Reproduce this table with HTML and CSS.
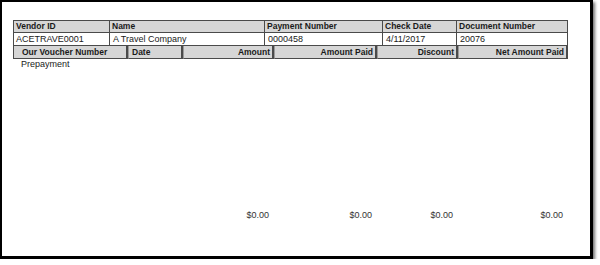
FILE: index.html
```html
<!DOCTYPE html>
<html>
<head>
<meta charset="utf-8">
<link rel="stylesheet" href="styles.css">
</head>
<body>
<div class="frame">
  <div class="report">
    <div class="grid top hdr">
      <div class="cell">Vendor ID</div>
      <div class="cell">Name</div>
      <div class="cell">Payment Number</div>
      <div class="cell">Check Date</div>
      <div class="cell">Document Number</div>
    </div>
    <div class="grid top data">
      <div class="cell">ACETRAVE0001</div>
      <div class="cell">A Travel Company</div>
      <div class="cell">0000458</div>
      <div class="cell">4/11/2017</div>
      <div class="cell">20076</div>
    </div>
    <div class="grid lines sub">
      <div class="cell first">Our Voucher Number</div>
      <div class="cell">Date</div>
      <div class="cell num">Amount</div>
      <div class="cell num">Amount Paid</div>
      <div class="cell num">Discount</div>
      <div class="cell num">Net Amount Paid</div>
    </div>
    <div class="memo">Prepayment</div>
    <div class="grid lines totals">
      <div class="cell"></div>
      <div class="cell"></div>
      <div class="cell num">$0.00</div>
      <div class="cell num">$0.00</div>
      <div class="cell num">$0.00</div>
      <div class="cell num">$0.00</div>
    </div>
  </div>
</div>
</body>
</html>
```
FILE: styles.css
```css
html, body {
  margin: 0;
  padding: 0;
  background: #ffffff;
}
body {
  font-family: "Liberation Sans", Arial, sans-serif;
  color: #1a1a1a;
}
.frame {
  width: 588px;
  height: 254px;
  border: 2px solid #000;
  border-right-width: 3px;
  border-bottom-width: 3px;
  box-shadow: 2px 2px 3px rgba(0, 0, 0, 0.55);
  background: #fff;
}
.report {
  width: 555px;
  padding: 18px 0 0 11px;
}
.grid {
  display: grid;
}
.top {
  grid-template-columns: 95px 155px 118px 74px 113px;
}
.lines {
  grid-template-columns: 115px 55px 91px 103px 81px 110px;
}
.cell {
  font-size: 9px;
  line-height: 11px;
  padding: 0 2px;
  white-space: nowrap;
  overflow: hidden;
}
.hdr {
  border: 1px solid #4a4a4a;
  background: #d6d6d6;
}
.hdr .cell {
  font-weight: bold;
  font-size: 8.5px;
  border-left: 1px solid #4a4a4a;
}
.hdr .cell:first-child,
.data .cell:first-child {
  border-left: none;
}
.data {
  border: 1px solid #4a4a4a;
  border-top: none;
  background: #fff;
}
.data .cell {
  border-left: 1px solid #4a4a4a;
  height: 12px;
  line-height: 12px;
  padding-left: 3px;
}
.data .cell:first-child {
  padding-left: 2px;
}
.sub .cell {
  background: #d6d6d6;
  font-weight: bold;
  font-size: 8.5px;
  height: 12px;
  line-height: 12px;
  border: 1px solid #4a4a4a;
  border-top: none;
  border-left: 1px solid #9a9a9a;
  box-shadow: inset -1px 0 0 #4a4a4a;
  padding: 0 3px;
}
.sub .cell.first {
  padding-left: 8px;
  border-left: 1px solid #4a4a4a;
}
.num {
  text-align: right;
}
.memo {
  font-size: 9px;
  line-height: 11px;
  padding: 0 0 0 8px;
}
.totals {
  margin-top: 140px;
}
.totals .cell {
  padding-right: 5px;
  color: #333;
}
```
